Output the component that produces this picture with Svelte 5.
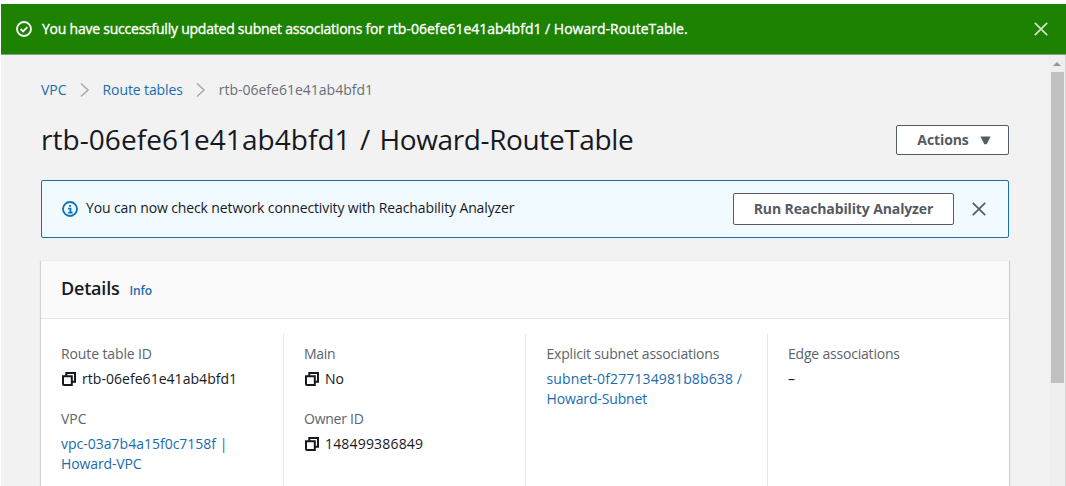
<script>
  const columns = [
    [
      { label: 'Route table ID', ls: -0.12, value: ['rtb-06efe61e41ab4bfd1'], vs: [0.04], copy: true },
      { label: 'VPC', ls: 0, value: ['vpc-03a7b4a15f0c7158f |', 'Howard-VPC'], vs: [0, -0.12], link: true }
    ],
    [
      { label: 'Main', ls: -0.3, value: ['No'], vs: [-0.1], copy: true },
      { label: 'Owner ID', ls: -0.25, value: ['148499386849'], vs: [0.18], copy: true }
    ],
    [
      {
        label: 'Explicit subnet associations', ls: -0.2,
        value: ['subnet-0f277134981b8b638 /', 'Howard-Subnet'], vs: [0.12, -0.14], link: true
      }
    ],
    [{ label: 'Edge associations', ls: -0.2, value: ['–'], vs: [0] }]
  ];
</script>

{#snippet chevron()}
  <svg class="chevron" width="10" height="16" viewBox="0 0 10 16"><path d="M1 1.5 8 8l-7 6.5" /></svg>
{/snippet}

{#snippet cross()}
  <svg class="cross" width="14" height="14" viewBox="0 0 14 14"><path d="m.8.8 12.4 12.4M13.2.8.8 13.2" /></svg>
{/snippet}

<div class="screen">
  <div class="flash">
    <svg width="16" height="16" viewBox="0 0 16 16"><circle cx="8" cy="8" r="7" /><path d="m4.6 8 2.5 2.4 4.2-4.2" /></svg>
    <p>You have successfully updated subnet associations for <span>rtb-06efe61e41ab4bfd1 / Howard-RouteTable.</span></p>
    <button aria-label="Dismiss">{@render cross()}</button>
  </div>

  <div class="body">
    <main>
      <nav>
        <a href="#vpc">VPC</a>
        {@render chevron()}
        <a class="tables" href="#tables">Route tables</a>
        {@render chevron()}
        <span>rtb-06efe61e41ab4bfd1</span>
      </nav>

      <header class="heading">
        <h1><span class="id">rtb-06efe61e41ab4bfd1</span> / <span class="name">Howard-RouteTable</span></h1>
        <button class="btn actions">
          <span>Actions</span>
          <svg width="11" height="9" viewBox="0 0 11 9"><path d="M.4.4h10.2L6.7 8.2H4.3z" /></svg>
        </button>
      </header>

      <section class="notice">
        <svg width="16" height="16" viewBox="0 0 16 16">
          <circle cx="8" cy="8" r="7" /><path d="M8.5 12V7.6H6.1M6 11.6h4.6M7 4.9h2" />
        </svg>
        <p>You can now check network connectivity with Reachability Analyzer</p>
        <button class="btn run"><span>Run Reachability Analyzer</span></button>
        <button aria-label="Close">{@render cross()}</button>
      </section>

      <section class="card">
        <div class="card-head"><h2>Details</h2><a href="#info">Info</a></div>
        <div class="columns">
          {#each columns as fields}
            <div class="column">
              {#each fields as f}
                <div>
                  <div class="label" style="letter-spacing: {f.ls}px">{f.label}</div>
                  <div class="value">
                    {#if f.copy}
                      <svg width="14" height="14" viewBox="0 0 14 14">
                        <path d="M1 4.2h8.8V13H2q-1 0-1-1zM4.3 4V1H13v8.8h-3" />
                      </svg>
                    {/if}
                    <div>
                      {#each f.value as line, i}
                        {#if f.link}
                          <a href="#open" style="letter-spacing: {f.vs[i]}px">{line}</a>
                        {:else}
                          <span style="letter-spacing: {f.vs[i]}px">{line}</span>
                        {/if}
                      {/each}
                    </div>
                  </div>
                </div>
              {/each}
            </div>
          {/each}
        </div>
      </section>
    </main>
    <div class="scrollbar">
      <svg width="8" height="4" viewBox="0 0 8 4"><path d="M0 4 4 0l4 4z" /></svg>
      <div class="thumb"></div>
    </div>
  </div>
</div>

<style>
  :global(body) { background: #fff; overflow: hidden; }
  * { box-sizing: border-box; margin: 0; }
  .screen {
    width: 1066px; height: 486px; padding: 4px 0 0 1px;
    display: flex; flex-direction: column; overflow: hidden;
    font: 14px/20px 'Open Sans', 'Noto Sans', sans-serif; color: #16191f;
  }
  svg { display: block; flex: none; fill: none; }
  button { padding: 0; border: 0; background: none; font-family: inherit; }
  a { color: #1a6bb0; text-decoration: none; }
  .flash {
    flex: none; height: 51px; padding: 0 18px 0 15px; display: flex; align-items: center;
    background: #1d8102; border-bottom: 1px solid #84a17c; color: #fff;
  }
  .flash > svg { stroke: #fff; stroke-width: 1.8; }
  .flash p {
    flex: 1; margin-left: 10px; font-weight: 500; letter-spacing: -0.23px; white-space: nowrap;
    -webkit-text-stroke: 0.35px #fff;
  }
  .flash span { letter-spacing: 0; }
  .cross { stroke: #545b64; stroke-width: 1.7; }
  .flash .cross { stroke: #d0e6cc; }
  .body { flex: 1; min-height: 0; display: flex; background: #f2f2f2; }
  main { width: 1048px; padding: 25px 40px 0; }
  nav { height: 20px; display: flex; align-items: center; color: #687078; }
  .tables { letter-spacing: -0.12px; }
  .chevron { margin: 0 13px; stroke: #a7acb0; stroke-width: 1.6; }
  .heading { margin-top: 22px; height: 36px; display: flex; align-items: center; justify-content: space-between; }
  h1 {
    font-size: 28px; line-height: 34px; padding-bottom: 2px; font-weight: 400;
    word-spacing: 2px; white-space: nowrap;
  }
  .id { letter-spacing: 0.05px; }
  .name { letter-spacing: -0.38px; }
  .btn {
    display: flex; align-items: center; justify-content: center; flex: none;
    background: #fff; border: 1px solid #545b64; border-radius: 2px;
    color: #545b64; font-size: 14px; font-weight: 700; white-space: nowrap;
  }
  .btn span { padding-bottom: 1px; }
  .actions { width: 113px; height: 30px; gap: 11px; padding-left: 3px; letter-spacing: -0.1px; }
  .actions svg { fill: #545b64; }
  .notice {
    margin-top: 22px; height: 58px; padding: 0 22px 0 20px; display: flex; align-items: center;
    background: #f1faff; border: 1px solid #1870a8; border-radius: 2px;
  }
  .notice > svg { stroke: #0c73b6; stroke-width: 1.8; }
  .notice p { flex: 1; margin-left: 8px; padding-bottom: 2px; letter-spacing: -0.12px; white-space: nowrap; }
  .run { width: 221px; height: 32px; margin-right: 18px; letter-spacing: -0.12px; }
  .card {
    margin-top: 22px; height: 250px; background: #fff; border-top: 1px solid #eaecec;
    box-shadow: 0 1px 1px 0 #c9cdcd, 1px 1px 1px 0 #c9cdcd, -1px 1px 1px 0 #d0d4d4;
  }
  .card-head {
    height: 58px; padding: 0 20px; display: flex; align-items: baseline; gap: 10px;
    background: #fafafa; border-bottom: 1px solid #e5e7e7;
  }
  h2 { font-size: 18px; line-height: 55px; font-weight: 600; letter-spacing: -0.2px; }
  .card-head a { font-size: 12px; font-weight: 600; letter-spacing: -0.1px; }
  .columns { padding-top: 15px; display: grid; grid-template-columns: 242px 242px 242px 1fr; height: 190px; }
  .column { padding: 10px 0 0 20px; border-left: 1px solid #e6e8e8; display: flex; flex-direction: column; gap: 20px; }
  .column:first-child { border-left-color: transparent; padding-left: 19px; }
  .column:nth-child(3) { padding-left: 20.5px; }
  .label { color: #5c646b; }
  .value { display: flex; margin-top: 5px; }
  .value svg { margin: 3px 6px 0 1px; stroke: #16191f; stroke-width: 2; }
  .value a, .value span { display: block; white-space: nowrap; }
  .scrollbar { width: 17px; padding: 7px 0 0 2px; background: #efefef; border-right: 1px solid #d8d8d8; }
  .scrollbar svg { margin-left: 2px; fill: #969696; }
  .thumb { width: 13px; height: 311px; margin-top: 6px; background: #c0c0c0; }
</style>
